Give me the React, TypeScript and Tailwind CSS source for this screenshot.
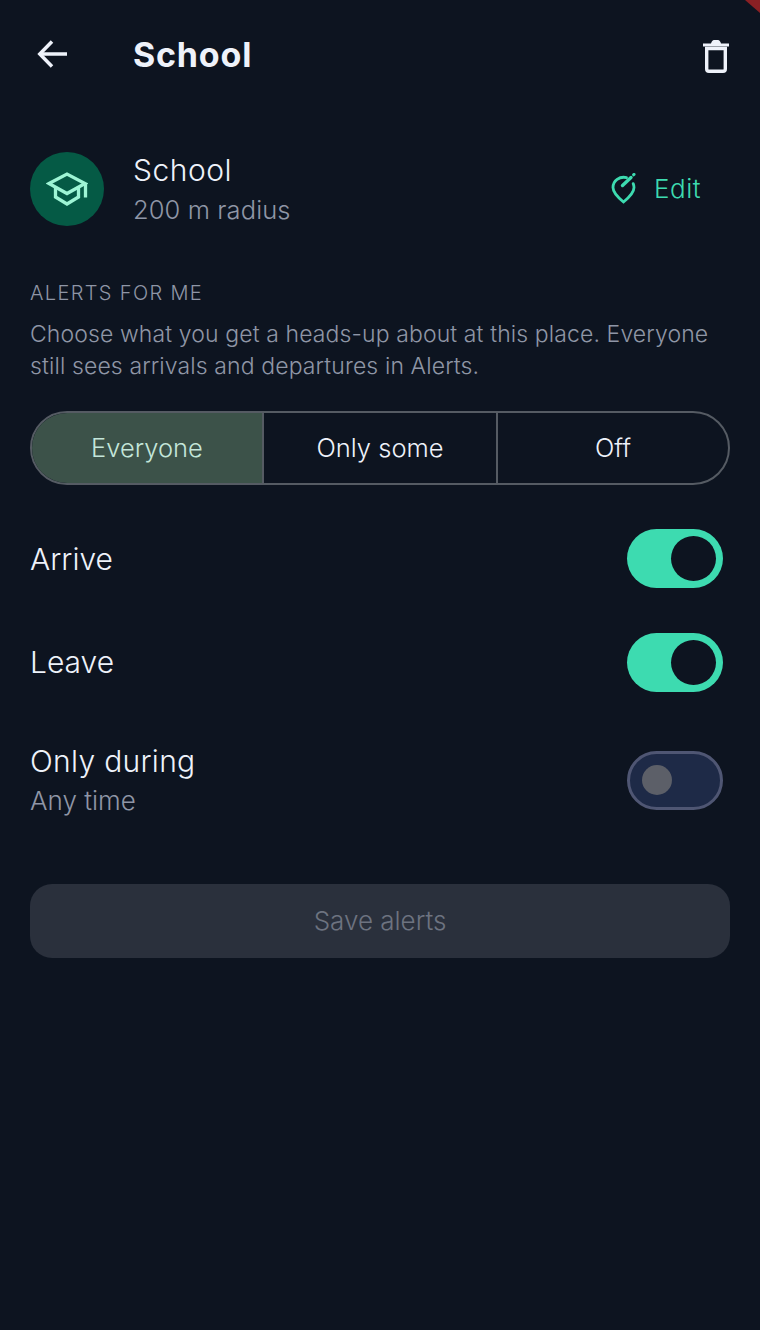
const font = { fontFamily: '"Inter", "Noto Sans", sans-serif' };

const BackArrow = () => (
  <svg width="30" height="28" viewBox="0 0 30 28" fill="none" stroke="#eef2fa" strokeWidth="3.5">
    <path d="M30 14 H3" />
    <path d="M15 1.5 L2.8 14 L15 26.5" />
  </svg>
);

const SchoolIcon = () => (
  <svg width="42" height="36" viewBox="0 0 42 36" fill="none" stroke="#9ef5d5" strokeWidth="3.3">
    <path d="M3 12.5 L21 3 L39 12.5 L21 22.5 Z" />
    <path d="M9.5 16 V26 L21 33 L32.5 26 V16" />
    <path d="M39.5 12 V26.5" />
  </svg>
);

const EditPin = () => (
  <svg width="26" height="32" viewBox="0 0 26 32" fill="none" stroke="#3ddbb0" strokeWidth="2.8" strokeLinecap="round">
    <path d="M15.5 4.6 C8.5 3 2 7.8 2 14.5 C2 19.5 7 24.5 12.5 29 C18 24.5 23 19.5 23 14.5 C23 13 22.7 11.8 22.2 10.6" />
    <path d="M11.5 12.5 L20 4.5" strokeWidth="3.4" />
    <path d="M22.6 1.8 L23 1.4" strokeWidth="3" />
  </svg>
);

const TrashIcon = () => (
  <svg width="26" height="34" viewBox="0 0 26 34" fill="none">
    <path d="M0 4.5 H8 Q9 1 11 1 H15 Q17 1 18 4.5 H26 V7.5 H0 Z" fill="#eef2fa" />
    <path d="M3.7 9.5 V30 Q3.7 32.3 6 32.3 H20 Q22.3 32.3 22.3 30 V9.5 Z" stroke="#eef2fa" strokeWidth="3.4" />
  </svg>
);

const Toggle = ({ on }: { on: boolean }) =>
  on ? (
    <div className="flex h-[59px] w-[96px] items-center justify-end rounded-full bg-[#3ddbb0] pr-[7px]">
      <div className="h-[45px] w-[45px] rounded-full bg-[#0d1420]" />
    </div>
  ) : (
    <div className="flex h-[59px] w-[96px] items-center rounded-full border-[3px] border-[#4f5673] bg-[#1e2a47] pl-[12px]">
      <div className="h-[30px] w-[30px] rounded-full bg-[#5c5f68]" />
    </div>
  );

const App = () => {
  return (
    <div style={font} className="relative h-[1330px] w-[760px] overflow-hidden bg-[#0d1420] font-light text-[#eef2fa]">
      {/* debug corner */}
      <svg className="absolute right-0 top-0" width="15" height="13" viewBox="0 0 15 13">
        <path d="M0 0 H15 V13 Z" fill="#8a2024" />
      </svg>

      {/* Header */}
      <div className="flex h-[108px] items-center pl-[37px] pr-[31px]">
        <BackArrow />
        <h1 className="ml-[66px] flex-1 pt-[1px] text-[34px] font-bold tracking-[0.8px]">School</h1>
        <div className="mt-[4px]">
          <TrashIcon />
        </div>
      </div>

      <div className="px-[30px]">
        {/* Place */}
        <div className="mt-[44px] flex h-[74px] items-center">
          <div className="flex h-[74px] w-[74px] items-center justify-center rounded-full bg-[#055a45]">
            <SchoolIcon />
          </div>
          <div className="ml-[29px] flex-1 pt-[3px]">
            <div className="text-[30px] leading-[38px] tracking-[0.5px]">School</div>
            <div className="text-[25.5px] leading-[41px] tracking-[0.1px] text-[#8f96a6]">200 m radius</div>
          </div>
          <div className="mr-[29px] flex items-center gap-[17px] text-[#3ddbb0]">
            <EditPin />
            <span className="-mt-[2px] text-[26px] tracking-[0.5px]">Edit</span>
          </div>
        </div>

        {/* Alerts */}
        <div className="mt-[53px] text-[20px] leading-[28px] tracking-[1.35px] text-[#8f96a6]">ALERTS FOR ME</div>
        <p className="mt-[11px] text-[23px] leading-[32px] tracking-[0.11px] text-[#8f96a6]">
          Choose what you get a heads-up about at this place. Everyone still sees arrivals and departures in Alerts.
        </p>

        {/* Segments */}
        <div className="mt-[29px] flex h-[74px] overflow-hidden rounded-full border-2 border-[#555b63] text-[25.5px]">
          <div className="flex w-[230px] items-center justify-center bg-[#3c5249] text-[#c4e6da]">Everyone</div>
          <div className="flex w-[234px] items-center justify-center border-l-2 border-[#555b63]">Only some</div>
          <div className="flex flex-1 items-center justify-center border-l-2 border-[#555b63]">Off</div>
        </div>

        {/* Toggles */}
        <div className="mt-[43px] flex h-[60px] items-center justify-between pr-[7px]">
          <span className="pt-[2px] text-[30px]">Arrive</span>
          <Toggle on />
        </div>
        <div className="mt-[44px] flex h-[60px] items-center justify-between pr-[7px]">
          <span className="text-[30px]">Leave</span>
          <Toggle on />
        </div>
        <div className="mt-[45px] flex h-[88px] items-center justify-between pr-[7px]">
          <div>
            <div className="text-[30px] leading-[40px] tracking-[0.3px]">Only during</div>
            <div className="text-[26px] leading-[40px] text-[#8f96a6]">Any time</div>
          </div>
          <div className="mb-[2px]">
            <Toggle on={false} />
          </div>
        </div>

        {/* Save */}
        <div className="mt-[59px] flex h-[74px] items-center justify-center rounded-[22px] bg-[#2a303c] pb-[2px] text-[26px] text-[#6d7380]">
          Save alerts
        </div>
      </div>
    </div>
  );
};

export default App;
